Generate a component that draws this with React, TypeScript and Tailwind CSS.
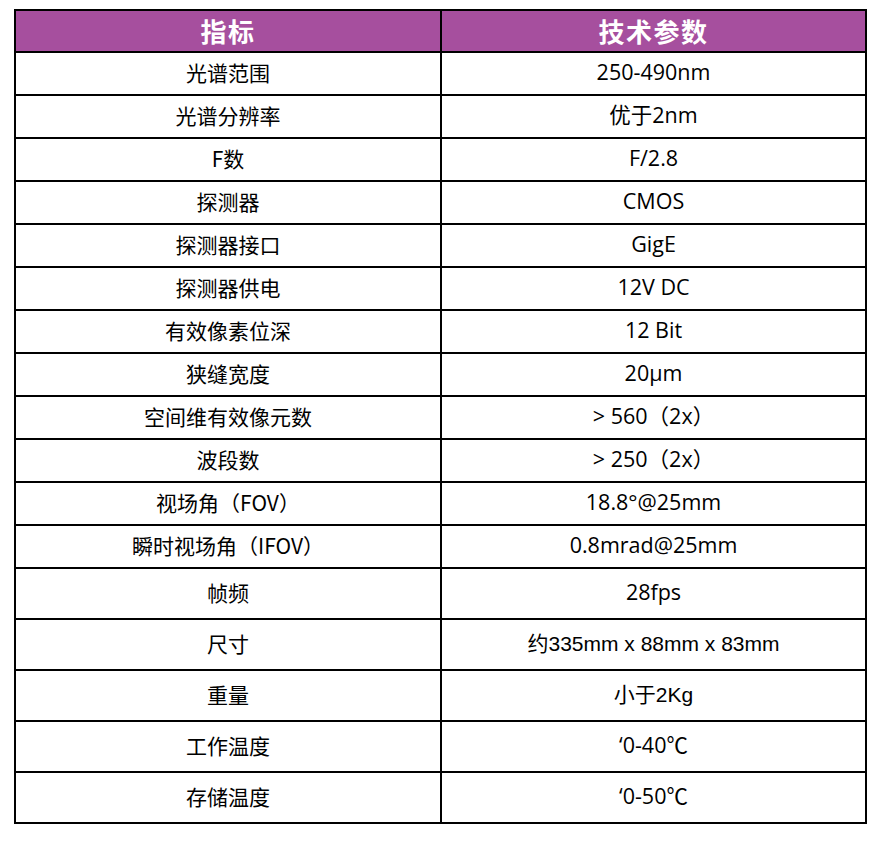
import React from "react";

type Row = { k: string; v: string; tall?: boolean; arial?: boolean };

const rows: Row[] = [
  { k: "光谱范围", v: "250-490nm" },
  { k: "光谱分辨率", v: "优于2nm" },
  { k: "F数", v: "F/2.8" },
  { k: "探测器", v: "CMOS" },
  { k: "探测器接口", v: "GigE" },
  { k: "探测器供电", v: "12V DC" },
  { k: "有效像素位深", v: "12 Bit" },
  { k: "狭缝宽度", v: "20μm" },
  { k: "空间维有效像元数", v: "> 560（2x）" },
  { k: "波段数", v: "> 250（2x）" },
  { k: "视场角（FOV）", v: "18.8°@25mm" },
  { k: "瞬时视场角（IFOV）", v: "0.8mrad@25mm" },
  { k: "帧频", v: "28fps", tall: true },
  { k: "尺寸", v: "约335mm x 88mm x 83mm", tall: true, arial: true },
  { k: "重量", v: "小于2Kg", tall: true, arial: true },
  { k: "工作温度", v: "‘0-40℃", tall: true },
  { k: "存储温度", v: "‘0-50℃", tall: true },
];

const sans = "font-['Open_Sans','Noto_Sans_CJK_SC',sans-serif] text-[21.5px]";
const arial = "font-['Liberation_Sans','Noto_Sans_CJK_SC',sans-serif] text-[21px]";

export default function App() {
  return (
    <div className="w-[880px] h-[842px] bg-white pt-[9px] pl-[14px]">
      <div className="w-[853px] border-2 border-black text-black">
        <div className="grid grid-cols-[426px_1fr] h-[40px] bg-[#a64f9e] text-white font-bold text-[26px] tracking-[1.5px] font-['Noto_Sans_CJK_SC',sans-serif]">
          <div className="flex items-center justify-center border-r-2 border-black leading-none pb-[1px]">指标</div>
          <div className="flex items-center justify-center leading-none pb-[1px]">技术参数</div>
        </div>
        {rows.map((r) => (
          <div
            key={r.k}
            className={`grid grid-cols-[426px_1fr] border-t-2 border-black ${r.tall ? "h-[51px]" : "h-[43px]"}`}
          >
            <div className="flex items-center justify-center border-r-2 border-black font-['Noto_Sans_CJK_SC',sans-serif] text-[21px] leading-none pb-[3px]">
              {r.k}
            </div>
            <div className={`flex items-center justify-center leading-none pb-[3px] ${r.arial ? arial : sans}`}>
              {r.v}
            </div>
          </div>
        ))}
      </div>
    </div>
  );
}
